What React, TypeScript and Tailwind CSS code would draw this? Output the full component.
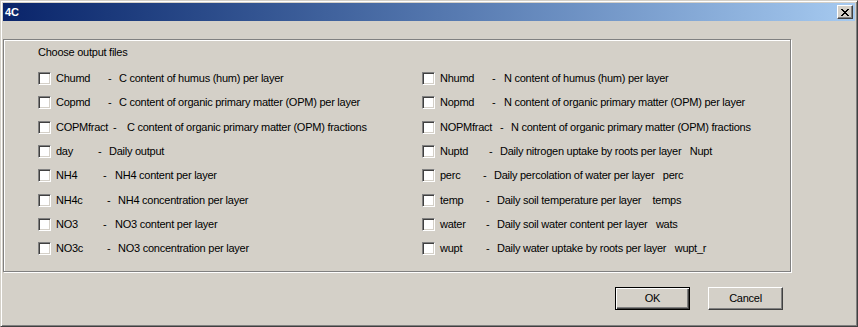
import React from 'react';

type Row = {
  name: string;
  desc: string;
  nameW: string;
  dashW: string;
};

const leftRows: Row[] = [
  { name: 'Chumd', desc: 'C content of humus (hum) per layer', nameW: 'w-[52px]', dashW: 'w-[11px]' },
  { name: 'Copmd', desc: 'C content of organic primary matter (OPM) per layer', nameW: 'w-[52px]', dashW: 'w-[11px]' },
  { name: 'COPMfract', desc: 'C content of organic primary matter (OPM) fractions', nameW: 'w-[57px]', dashW: 'w-[14px]' },
  { name: 'day', desc: 'Daily output', nameW: 'w-[42px]', dashW: 'w-[11px]' },
  { name: 'NH4', desc: 'NH4 content per layer', nameW: 'w-[47px]', dashW: 'w-[12px]' },
  { name: 'NH4c', desc: 'NH4 concentration per layer', nameW: 'w-[51px]', dashW: 'w-[11px]' },
  { name: 'NO3', desc: 'NO3 content per layer', nameW: 'w-[47px]', dashW: 'w-[12px]' },
  { name: 'NO3c', desc: 'NO3 concentration per layer', nameW: 'w-[51px]', dashW: 'w-[11px]' },
];

const rightRows: Row[] = [
  { name: 'Nhumd', desc: 'N content of humus (hum) per layer', nameW: 'w-[52px]', dashW: 'w-[12px]' },
  { name: 'Nopmd', desc: 'N content of organic primary matter (OPM) per layer', nameW: 'w-[52px]', dashW: 'w-[12px]' },
  { name: 'NOPMfract', desc: 'N content of organic primary matter (OPM) fractions', nameW: 'w-[60px]', dashW: 'w-[11px]' },
  { name: 'Nuptd', desc: 'Daily nitrogen uptake by roots per layer   Nupt', nameW: 'w-[49px]', dashW: 'w-[11px]' },
  { name: 'perc', desc: 'Daily percolation of water per layer   perc', nameW: 'w-[43px]', dashW: 'w-[11px]' },
  { name: 'temp', desc: 'Daily soil temperature per layer    temps', nameW: 'w-[46px]', dashW: 'w-[11px]' },
  { name: 'water', desc: 'Daily soil water content per layer   wats', nameW: 'w-[46px]', dashW: 'w-[11px]' },
  { name: 'wupt', desc: 'Daily water uptake by roots per layer   wupt_r', nameW: 'w-[46px]', dashW: 'w-[11px]' },
];

const Checkbox: React.FC = () => (
  <span className="block w-[13px] h-[13px] shrink-0 bg-white border border-t-[#808080] border-l-[#808080] border-b-white border-r-white shadow-[inset_1px_1px_0_#404040,inset_-1px_-1px_0_#d4d0c8]" />
);

const OptionRow: React.FC<{ row: Row }> = ({ row }) => (
  <div className="h-[13px] flex items-center">
    <Checkbox />
    <div className="ml-[5px] flex items-center whitespace-pre leading-[13px]">
      <span className={row.nameW}>{row.name}</span>
      <span className={row.dashW}>-</span>
      <span>{row.desc}</span>
    </div>
  </div>
);

const Column: React.FC<{ rows: Row[] }> = ({ rows }) => (
  <div className="flex flex-col gap-[11.33px]">
    {rows.map(r => (
      <OptionRow key={r.name} row={r} />
    ))}
  </div>
);

const App: React.FC = () => {
  return (
    <div className="w-[858px] h-[327px] bg-[#d4d0c8] border border-t-[#d4d0c8] border-l-[#d4d0c8] border-b-[#404040] border-r-[#404040] shadow-[inset_1px_1px_0_#fff,inset_-1px_-1px_0_#808080] p-[2px] flex flex-col text-black text-[11px] tracking-[-0.25px] font-['Liberation_Sans',Arial,sans-serif]">
      {/* Title bar */}
      <div className="h-[18px] flex items-center justify-between bg-gradient-to-r from-[#0a246a] to-[#a6caf0] pl-[2px] pr-[2px]">
        <span className="text-white font-bold leading-[13px] tracking-normal">4C</span>
        <button className="w-[16px] h-[14px] flex items-center justify-center bg-[#d4d0c8] border border-t-white border-l-white border-b-[#404040] border-r-[#404040] shadow-[inset_-1px_-1px_0_#808080]">
          <svg width="8" height="7" viewBox="0 0 8 7" shapeRendering="crispEdges">
            <path d="M0 0h2v1h-2zM6 0h2v1h-2zM1 1h2v1h-2zM5 1h2v1h-2zM2 2h4v1h-4zM3 3h2v1h-2zM2 4h4v1h-4zM1 5h2v1h-2zM5 5h2v1h-2zM0 6h2v1h-2zM6 6h2v1h-2z" fill="#000" />
          </svg>
        </button>
      </div>

      {/* Group box */}
      <div className="mt-[18px] w-[788px] h-[233px] border border-[#808080] shadow-[inset_1px_1px_0_#fff,1px_1px_0_#fff] pl-[34px] pt-[6px]">
        <div className="leading-[13px]">Choose output files</div>
        <div className="mt-[13px] grid grid-cols-[384px_1fr]">
          <Column rows={leftRows} />
          <Column rows={rightRows} />
        </div>
      </div>

      {/* Buttons */}
      <div className="mt-[15px] flex justify-end gap-[18px] pr-[72px]">
        <button className="w-[75px] h-[23px] flex items-center justify-center border border-black shadow-[inset_1px_1px_0_#fff,inset_-1px_-1px_0_#404040,inset_-2px_-2px_0_#808080] leading-[13px]">
          OK
        </button>
        <button className="w-[75px] h-[23px] flex items-center justify-center border border-t-white border-l-white border-b-[#404040] border-r-[#404040] shadow-[inset_-1px_-1px_0_#808080] leading-[13px]">
          Cancel
        </button>
      </div>
    </div>
  );
};

export default App;
